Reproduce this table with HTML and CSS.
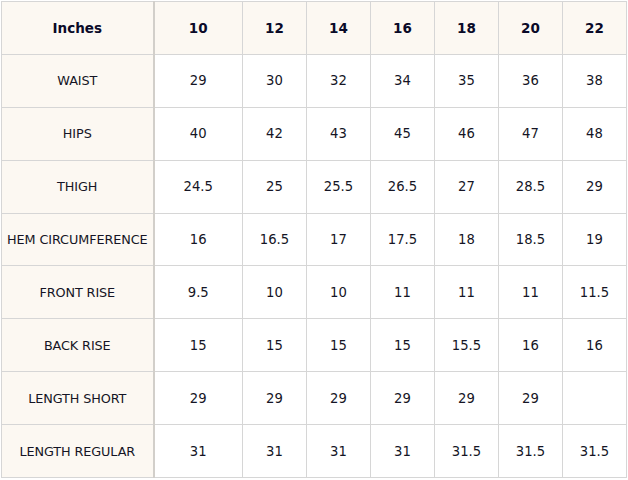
FILE: index.html
```html
<!DOCTYPE html>
<html>
<head>
<meta charset="utf-8">
<link rel="stylesheet" href="styles.css">
</head>
<body>
<table class="size-table">
  <colgroup>
    <col class="c-label"><col class="c-first"><col class="c-n"><col class="c-n"><col class="c-n"><col class="c-n"><col class="c-n"><col class="c-n">
  </colgroup>
  <thead>
    <tr><th class="label">Inches</th><th>10</th><th>12</th><th>14</th><th>16</th><th>18</th><th>20</th><th>22</th></tr>
  </thead>
  <tbody>
    <tr><td class="label">WAIST</td><td>29</td><td>30</td><td>32</td><td>34</td><td>35</td><td>36</td><td>38</td></tr>
    <tr><td class="label">HIPS</td><td>40</td><td>42</td><td>43</td><td>45</td><td>46</td><td>47</td><td>48</td></tr>
    <tr><td class="label">THIGH</td><td>24.5</td><td>25</td><td>25.5</td><td>26.5</td><td>27</td><td>28.5</td><td>29</td></tr>
    <tr><td class="label">HEM CIRCUMFERENCE</td><td>16</td><td>16.5</td><td>17</td><td>17.5</td><td>18</td><td>18.5</td><td>19</td></tr>
    <tr><td class="label">FRONT RISE</td><td>9.5</td><td>10</td><td>10</td><td>11</td><td>11</td><td>11</td><td>11.5</td></tr>
    <tr><td class="label">BACK RISE</td><td>15</td><td>15</td><td>15</td><td>15</td><td>15.5</td><td>16</td><td>16</td></tr>
    <tr><td class="label">LENGTH SHORT</td><td>29</td><td>29</td><td>29</td><td>29</td><td>29</td><td>29</td><td></td></tr>
    <tr><td class="label">LENGTH REGULAR</td><td>31</td><td>31</td><td>31</td><td>31</td><td>31.5</td><td>31.5</td><td>31.5</td></tr>
  </tbody>
</table>
</body>
</html>
```
FILE: styles.css
```css
html, body {
  margin: 0;
  padding: 0;
  background: #ffffff;
}
.size-table {
  margin: 1px 0 0 1px;
  border-collapse: collapse;
  table-layout: fixed;
  width: 626px;
  font-family: "DejaVu Sans", Verdana, sans-serif;
  font-size: 13.2px;
  color: #151525;
}
.c-label { width: 152px; }
.c-first { width: 89px; }
.c-n { width: 64px; }
.size-table th,
.size-table td {
  border: 1px solid #d6d6d6;
  height: 51.9px;
  padding: 0;
  text-align: center;
  vertical-align: middle;
}
.size-table thead th {
  background: #fcf8f2;
  font-weight: bold;
  color: #0a0a28;
  font-size: 13.5px;
}
.size-table .label {
  background: #fcf8f2;
  border-right: 2px solid #d2cfca;
}
.size-table td.label {
  font-size: 12.8px;
  letter-spacing: -0.1px;
}
```
